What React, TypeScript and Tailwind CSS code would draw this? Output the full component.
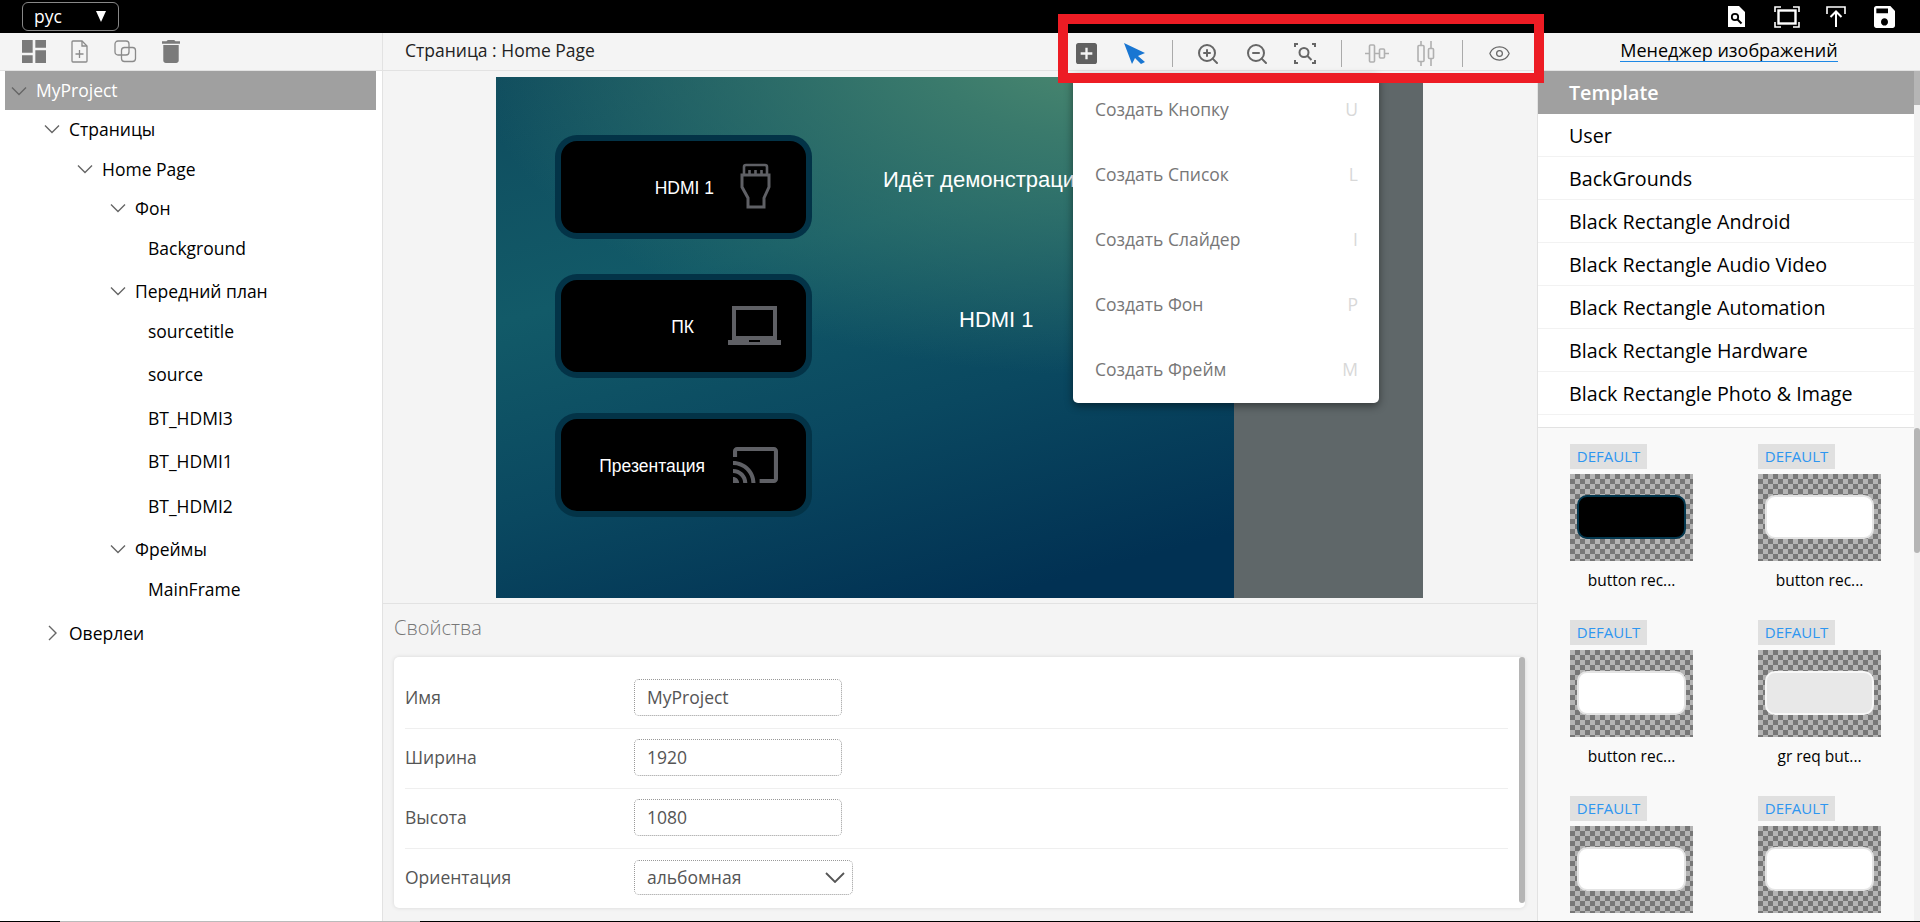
import { ZoomIn, ZoomOut, Eye } from "lucide-react";

const treeRows = [
  { label: "Страницы", pad: "pl-[39px]", open: true, mt: "mt-[-1px]" },
  { label: "Home Page", pad: "pl-[72px]", open: true, mt: "mt-0" },
  { label: "Фон", pad: "pl-[105px]", open: true, mt: "mt-[-1px]" },
  { label: "Background", pad: "pl-[143px]", leaf: true, mt: "mt-0" },
  { label: "Передний план", pad: "pl-[105px]", open: true, mt: "mt-[3px]" },
  { label: "sourcetitle", pad: "pl-[143px]", leaf: true, mt: "mt-0" },
  { label: "source", pad: "pl-[143px]", leaf: true, mt: "mt-[3px]" },
  { label: "BT_HDMI3", pad: "pl-[143px]", leaf: true, mt: "mt-[4px]" },
  { label: "BT_HDMI1", pad: "pl-[143px]", leaf: true, mt: "mt-[3px]" },
  { label: "BT_HDMI2", pad: "pl-[143px]", leaf: true, mt: "mt-[5px]" },
  { label: "Фреймы", pad: "pl-[105px]", open: true, mt: "mt-[3px]" },
  { label: "MainFrame", pad: "pl-[143px]", leaf: true, mt: "mt-0" },
  { label: "Оверлеи", pad: "pl-[39px]", open: false, mt: "mt-[4px]" },
];

const menuItems = [
  ["Создать Кнопку", "U"],
  ["Создать Список", "L"],
  ["Создать Слайдер", "I"],
  ["Создать Фон", "P"],
  ["Создать Фрейм", "M"],
];

const groups = ["User", "BackGrounds", "Black Rectangle Android", "Black Rectangle Audio Video", "Black Rectangle Automation", "Black Rectangle Hardware", "Black Rectangle Photo & Image"];

// last row sits below the fold, its captions are never visible
const thumbs = [
  { name: "button rec...", inner: "bg-black border-[#04384f]" },
  { name: "button rec...", inner: "bg-white border-[#e4e4e4]" },
  { name: "button rec...", inner: "bg-white border-[#e4e4e4]" },
  { name: "gr req but...", inner: "bg-[#e8e8e8] border-[#f8f8f8]" },
  { name: "", inner: "bg-white border-[#e4e4e4]" },
  { name: "", inner: "bg-white border-[#e4e4e4]" },
];

function Chevron({ open = true }: { open?: boolean }) {
  return (
    <svg width="16" height="16" viewBox="0 0 16 16" className="shrink-0" fill="none" stroke="#666" strokeWidth="1.4">
      {open ? <path d="M1 4.500l7 7 7-7" /> : <path d="M5 1l7 7-7 7" />}
    </svg>
  );
}

function MaterialIcon({ d, className, view = "0 0 24 24" }: { d: string; className: string; view?: string }) {
  return (
    <svg viewBox={view} className={className} fill="currentColor" preserveAspectRatio="none">
      <path d={d} />
    </svg>
  );
}

function CanvasButton({ label, mt, children }: { label: string; mt: string; children: React.ReactNode }) {
  return (
    <div className={`flex h-[104px] w-[257px] items-center justify-end rounded-[22px] border-[6px] border-[#03384f]/90 bg-black ${mt}`}>
      <span className="pt-[3px] font-['Liberation_Sans',sans-serif] text-[17.5px] text-white">{label}</span>
      {children}
    </div>
  );
}

export default function App() {
  return (
    <div className="relative h-[922px] w-[1920px] overflow-hidden bg-white font-['Open_Sans',sans-serif] text-black">
      {/* top bar */}
      <div className="flex h-[33px] items-center bg-black pl-[22px] pr-[25px] text-white">
        <div className="flex h-[29px] w-[97px] items-center justify-between rounded-[6px] border border-[#888] pl-[11px] pr-[12px] text-[17.5px]">
          <span>рус</span>
          <span className="h-0 w-0 border-x-[5.5px] border-t-[11px] border-x-transparent border-t-white" />
        </div>
        <div className="ml-auto flex items-center">
          <svg width="17" height="23" viewBox="0 0 17 23">
            <path d="M0 1h11l6 6v15H0z" fill="#fff" />
            <circle cx="7" cy="12" r="3.200" fill="none" stroke="#000" strokeWidth="1.800" />
            <path d="M9.500 14.500l4 4" stroke="#000" strokeWidth="2" />
          </svg>
          <svg width="26" height="22" viewBox="0 0 26 22" className="ml-[29px]" fill="none" stroke="#fff" strokeWidth="1.6">
            <path d="M1 6V1h6M19 1h6v5M25 16v5h-6M7 21H1v-5" />
            <rect x="4.500" y="4.500" width="17" height="13" strokeWidth="2.400" />
          </svg>
          <svg width="20" height="22" viewBox="0 0 20 22" className="ml-[26px]" fill="none" stroke="#fff" strokeWidth="2">
            <path d="M1 8V1h18v7" strokeWidth="1.600" />
            <path d="M10 21V6M4.500 11L10 5.500 15.500 11" />
          </svg>
          <MaterialIcon className="ml-[28px] h-[22px] w-[21px]" view="3 3 18 18" d="M17 3H5c-1.11 0-2 .9-2 2v14c0 1.1.89 2 2 2h14c1.1 0 2-.9 2-2V7l-4-4zm-5 16c-1.66 0-3-1.34-3-3s1.34-3 3-3 3 1.34 3 3-1.34 3-3 3zm3-10H5V5h10v4z" />
        </div>
      </div>

      <div className="flex h-[889px]">
        {/* project tree */}
        <aside className="w-[383px] shrink-0 border-r border-[#e2e2e2]">
          <div className="flex h-[38px] items-center border-b border-[#e2e2e2] bg-[#f4f4f4] pl-[22px] text-[#7a7a7a]">
            <MaterialIcon className="h-[23px] w-[24px]" view="3 3 18 18" d="M3 13h8V3H3v10zm0 8h8v-6H3v6zm10 0h8V11h-8v10zm0-18v6h8V3h-8z" />
            <svg width="17" height="23" viewBox="0 0 17 23" className="ml-[25px]" fill="none" stroke="#8a8a8a" strokeWidth="1.3">
              <path d="M1 2a1 1 0 0 1 1-1h9l5 5v15a1 1 0 0 1-1 1H2a1 1 0 0 1-1-1z" />
              <path d="M11 1v5h5M8.500 10v8M4.500 14h8" />
            </svg>
            <svg width="23" height="23" viewBox="0 0 23 23" className="ml-[26px]" fill="none" stroke="#8a8a8a" strokeWidth="1.3">
              <rect x="1" y="1" width="14" height="14" rx="3" />
              <rect x="7.500" y="7.500" width="14" height="14" rx="3" />
            </svg>
            <MaterialIcon className="ml-[25px] h-[23px] w-[18px]" view="5 3 14 18" d="M6 19c0 1.1.9 2 2 2h8c1.1 0 2-.9 2-2V7H6v12zM19 4h-3.5l-1-1h-5l-1 1H5v2h14V4z" />
          </div>
          <div className="pl-[5px] pr-[6px] text-[17.500px]">
            <div className="flex h-[39px] items-center gap-[9px] bg-[#a0a0a0] pl-[6px] text-white">
              <Chevron />
              MyProject
            </div>
            {treeRows.map((row) => (
              <div key={row.label} className={`flex h-[40px] items-center gap-[9px] ${row.pad} ${row.mt}`}>
                {!row.leaf && <Chevron open={row.open} />}
                {row.label}
              </div>
            ))}
          </div>
        </aside>

        {/* center */}
        <section className="relative flex w-[1154px] shrink-0 flex-col bg-[#f4f4f4]">
          <div className="flex h-[38px] items-center border-b border-[#e2e2e2] pb-[3px] pl-[22px] text-[17.500px] text-[#222]">
            <span>Страница : Home Page</span>
            <div className="absolute left-[693px] top-[7px] flex items-center">
              <MaterialIcon className="h-[21px] w-[21px] text-[#616161]" view="3 3 18 18" d="M19 3H5c-1.11 0-2 .9-2 2v14c0 1.1.89 2 2 2h14c1.1 0 2-.9 2-2V5c0-1.1-.9-2-2-2zm-2 10h-4v4h-2v-4H7v-2h4V7h2v4h4v2z" />
              <svg width="22" height="21" viewBox="0 0 22 21" className="ml-[27px]" fill="#1976d2">
                <path d="M0 0l21 10-7 3 7 6-4 2-6-6-3 6z" />
              </svg>
              <div className="ml-[26px] h-[27px] w-px bg-[#aaa]" />
              <ZoomIn className="ml-[23px] text-[#666]" size={24} strokeWidth={2} />
              <ZoomOut className="ml-[25px] text-[#666]" size={24} strokeWidth={2} />
              <svg width="22" height="21" viewBox="0 0 22 21" className="ml-[25px]" fill="none" stroke="#666" strokeWidth="2">
                <path d="M1 4V1h3M18 1h3v3M21 17v3h-3M4 20H1v-3" />
                <circle cx="10" cy="9.500" r="4.500" />
                <path d="M13.500 13l4 4" />
              </svg>
              <div className="ml-[25px] h-[27px] w-px bg-[#aaa]" />
              <svg width="24" height="21" viewBox="0 0 24 21" className="ml-[23px]" fill="none" stroke="#b0b0b0" strokeWidth="1.6">
                <path d="M0 10.500h4M10 10.500h4M20 10.500h4" />
                <rect x="4.500" y="2" width="5" height="17" rx="1" />
                <rect x="14.500" y="6" width="5" height="9" rx="1" />
              </svg>
              <svg width="18" height="25" viewBox="0 0 18 25" className="ml-[28px]" fill="none" stroke="#b0b0b0" strokeWidth="1.6">
                <path d="M4 0v4M4 21v4M14 0v7M14 18v7" />
                <rect x="1" y="4.500" width="6" height="16" rx="1" />
                <rect x="11.500" y="7.500" width="5" height="10" rx="1" />
              </svg>
              <div className="ml-[27px] h-[27px] w-px bg-[#aaa]" />
              <Eye className="ml-[25px] text-[#666]" size={23} strokeWidth={1.3} />
            </div>
          </div>

          <div className="h-[533px] border-b border-[#e2e2e2] pl-[113px] pt-[6px]">
            <div className="relative flex h-[521px] w-[927px] flex-col pl-[59px] pt-[58px] bg-[radial-gradient(ellipse_640px_340px_at_66%_-8%,#4f8c70_0%,#3a7a6c_30%,rgba(30,100,105,0)_100%),linear-gradient(165deg,#0f4c5e_0%,#125a68_32%,#0a4860_58%,#013153_85%)]">
              <div className="absolute bottom-0 right-0 top-0 w-[189px] bg-[#5f6769]" />
              <CanvasButton label="HDMI 1" mt="mt-0">
                <svg width="31" height="46" viewBox="0 0 31 46" className="ml-[26px] mr-[35px] mt-[-2px]" fill="none" stroke="#5f6065" strokeWidth="3">
                  <path d="M4 12V4a2 2 0 0 1 2-2h19a2 2 0 0 1 2 2v8M9.500 7v5M15.500 7v5M21.500 7v5" strokeWidth="2.600" />
                  <path d="M2 12h27v12l-5 11v9H8v-9L2 24z" />
                </svg>
              </CanvasButton>
              <CanvasButton label="ПК" mt="mt-[35px]">
                <svg width="53" height="40" viewBox="0 0 53 40" className="ml-[34px] mr-[25px]" fill="#5f6065">
                  <path d="M4 0h45v34H4zM8 4v26h37V4z" fillRule="evenodd" />
                  <path d="M0 34h21v2h11v-2h21v5H0z" />
                </svg>
              </CanvasButton>
              <CanvasButton label="Презентация" mt="mt-[35px]">
                <MaterialIcon className="ml-[28px] mr-[28px] h-[36px] w-[45px] text-[#5f6065]" view="1 3 22 18" d="M21 3H3c-1.1 0-2 .9-2 2v3h2V5h18v14h-7v2h7c1.1 0 2-.9 2-2V5c0-1.1-.9-2-2-2zM1 18v3h3c0-1.66-1.34-3-3-3zm0-4v2c2.76 0 5 2.24 5 5h2c0-3.87-3.13-7-7-7zm0-4v2c4.97 0 9 4.03 9 9h2c0-6.08-4.93-11-11-11z" />
              </CanvasButton>
              <span className="absolute left-[387px] top-[86px] whitespace-nowrap font-['Liberation_Sans',sans-serif] text-[22px] text-white">Идёт демонстрация</span>
              <span className="absolute left-[463px] top-[226px] font-['Liberation_Sans',sans-serif] text-[22px] text-white">HDMI 1</span>
            </div>
          </div>

          <div className="flex-1 px-[11px]">
            <h2 className="mt-[10px] text-[20px] font-light leading-[28px] text-[#777]">Свойства</h2>
            <div className="relative mt-[15px] h-[251px] w-[1131px] rounded-[5px] bg-white pl-[11px] pr-[17px] pt-[12px] text-[17.500px] text-[#555] shadow-[0_0_4px_rgba(0,0,0,0.12)]">
              {[["Имя", "MyProject"], ["Ширина", "1920"], ["Высота", "1080"]].map(([label, value]) => (
                <div key={label} className="flex h-[60px] items-center border-b border-[#efefef] pb-[3px]">
                  <span className="w-[229px]">{label}</span>
                  <div className="flex h-[37px] w-[208px] items-center rounded-[5px] border border-dotted border-[#999] pl-[12px]">{value}</div>
                </div>
              ))}
              <div className="flex h-[56px] items-center">
                <span className="w-[229px]">Ориентация</span>
                <div className="flex h-[35px] w-[219px] items-center justify-between rounded-[5px] border border-dotted border-[#999] pl-[12px] pr-[7px]">
                  альбомная
                  <svg width="20" height="11" viewBox="0 0 20 11" fill="none" stroke="#555" strokeWidth="1.8"><path d="M1 1l9 9 9-9" /></svg>
                </div>
              </div>
              <div className="absolute right-0 top-0 h-[246px] w-[6px] rounded-[3px] bg-[#b5b5b5]" />
            </div>
          </div>

          {/* add menu */}
          <div className="absolute left-[690px] top-[41px] h-[329px] w-[306px] rounded-[5px] bg-white pt-[3px] text-[17.500px] text-[#777] shadow-[0_3px_8px_rgba(0,0,0,0.45)]">
            {menuItems.map(([label, key]) => (
              <div key={label} className="flex h-[65px] items-center justify-between pl-[22px] pr-[21px]">
                <span>{label}</span>
                <span className="text-[#d8d8d8]">{key}</span>
              </div>
            ))}
          </div>
        </section>

        {/* image manager */}
        <aside className="relative flex-1 border-l border-[#e2e2e2]">
          <div className="flex h-[38px] items-center justify-center border-b border-[#e2e2e2] bg-[#f4f4f4] pb-[2px] text-[18px]">
            <span className="border-b border-[#1e88e5] leading-[21px]">Менеджер изображений</span>
          </div>
          <div className="h-[357px] border-b border-[#e2e2e2] pr-[6px] text-[19.700px]">
            <div className="flex h-[43px] items-center bg-[#a0a0a0] pl-[31px] font-semibold text-white">Template</div>
            {groups.map((group) => (
              <div key={group} className="flex h-[43px] items-center border-b border-[#f2f2f2] pl-[31px] pt-[1px]">{group}</div>
            ))}
          </div>
          <div className="grid h-[494px] grid-cols-[123px_123px] content-start gap-x-[65px] gap-y-[21px] overflow-hidden bg-[#f9f9f9] pl-[32px] pt-[16px]">
            {thumbs.map((thumb, i) => (
              <div key={i} className="h-[155px]">
                <div className="flex h-[25px] w-[77px] items-center justify-center bg-[#e0e0e0] text-[15px] text-[#2e96f0]">DEFAULT</div>
                <div className="mt-[5px] flex h-[87px] items-center justify-center bg-[repeating-conic-gradient(#777_0_25%,#b4b4b4_0_50%)] bg-[length:10px_10px] pb-[2px]">
                  <div className={`h-[44px] w-[109px] rounded-[10px] border-2 ${thumb.inner}`} />
                </div>
                {thumb.name && <div className="mt-[8px] text-center text-[15.500px]">{thumb.name}</div>}
              </div>
            ))}
          </div>
          {/* scrollbars */}
          <div className="absolute bottom-0 right-0 top-[38px] w-[6px] bg-[#f1f1f1]" />
          <div className="absolute right-0 top-[38px] h-[34px] w-[6px] bg-[#b5b5b5]" />
          <div className="absolute right-0 top-[395px] h-[125px] w-[6px] rounded-[3px] bg-[#b5b5b5]" />
        </aside>
      </div>

      {/* page scrollbar sliver */}
      <div className="absolute bottom-0 left-0 flex h-px w-full bg-black">
        <div className="ml-[60px] w-[360px] bg-[#bbb]" />
      </div>

      {/* annotation frame */}
      <div className="absolute left-[1058px] top-[14px] h-[69px] w-[486px] border-[10px] border-[#ed1c24]" />
    </div>
  );
}
